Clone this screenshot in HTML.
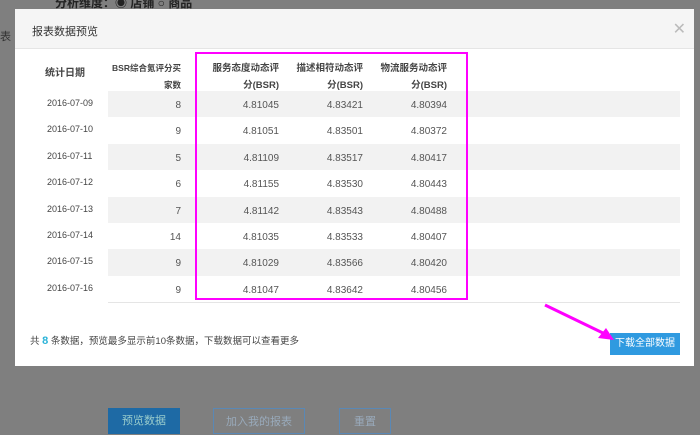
<!DOCTYPE html>
<html><head><meta charset="utf-8"><style>
*{margin:0;padding:0;box-sizing:border-box}
body{width:700px;height:432px;background:#7f7f7f;position:relative;overflow:hidden;font-family:"Liberation Sans","Noto Sans CJK SC",sans-serif;font-size:10px;color:#333}
.top{position:absolute;left:55px;top:-6px;color:#222;font-size:12px;font-weight:bold}
.side{position:absolute;left:0;top:28px;color:#333;font-size:11px}
.modal{position:absolute;left:15px;top:9px;width:679px;height:357px;background:#fff}
.hd{height:40px;background:#f5f5f5;border-bottom:1px solid #e5e5e5;padding:14px 0 0 17px;font-size:11px;color:#333}
.x{position:absolute;right:8px;top:10px;font-size:16px;color:#bbb}
.row{position:absolute;left:0;width:665px;height:26.4px}
.g{background:#f2f2f2;left:93px;width:572px}
.c{position:absolute;text-align:right;color:#555;white-space:nowrap}
.d{position:absolute;left:32px;color:#444;font-size:9px}
.mag{position:absolute;left:180px;top:43px;width:273px;height:248px;border:2px solid #f0f}
.foot{position:absolute;left:15px;top:324px;font-size:9.5px;color:#444}
.btn{position:absolute;left:595px;top:324px;width:70px;height:22px;background:#2f9ae0;color:#fff;text-align:center;line-height:22px;font-size:10px}
.b{position:absolute;top:408px;height:26px;line-height:26px;text-align:center;font-size:11px}
</style></head><body>
<div class="top">分析维度：◉ 店铺 ○ 商品</div>
<div class="side">表</div>
<div class="modal">
<div class="hd">报表数据预览</div><div class="x">✕</div>
<div class="c" style="left:30px;top:55px;width:40px;text-align:center;font-weight:bold;color:#444">统计日期</div>
<div class="c" style="left:93px;top:51px;width:73px;line-height:17px;font-weight:bold;color:#444;font-size:8.5px">BSR综合氪评分买<br>家数</div>
<div class="c" style="left:180px;top:51px;width:84px;line-height:17px;font-weight:bold;color:#444;font-size:9.5px">服务态度动态评<br>分(BSR)</div>
<div class="c" style="left:264px;top:51px;width:84px;line-height:17px;font-weight:bold;color:#444;font-size:9.5px">描述相符动态评<br>分(BSR)</div>
<div class="c" style="left:348px;top:51px;width:84px;line-height:17px;font-weight:bold;color:#444;font-size:9.5px">物流服务动态评<br>分(BSR)</div>
<div id="rows"></div>
<div class="mag"></div>
<div class="foot">共 <b style="color:#2bb3d8;font-size:11px">8</b> 条数据，预览最多显示前10条数据，下载数据可以查看更多</div>
<div class="btn">下载全部数据</div>
</div>
<svg style="position:absolute;left:540px;top:300px" width="80" height="45"><line x1="5" y1="5" x2="65" y2="34" stroke="#f0f" stroke-width="3"/><polygon points="74,40 58,38 66,28" fill="#f0f"/></svg>
<div class="b" style="left:108px;width:72px;background:#1e6aa5;color:#9cc">预览数据</div>
<div class="b" style="left:213px;width:92px;border:1px solid #5a88b5;color:#9ab">加入我的报表</div>
<div class="b" style="left:339px;width:52px;border:1px solid #5a88b5;color:#9ab">重置</div>
<script>
var d=[["09",8,"4.81045","4.83421","4.80394"],["10",9,"4.81051","4.83501","4.80372"],["11",5,"4.81109","4.83517","4.80417"],["12",6,"4.81155","4.83530","4.80443"],["13",7,"4.81142","4.83543","4.80488"],["14",14,"4.81035","4.83533","4.80407"],["15",9,"4.81029","4.83566","4.80420"],["16",9,"4.81047","4.83642","4.80456"]];
var h="";d.forEach(function(r,i){var t=82+i*26.4;
if(i%2==0)h+='<div class="row g" style="top:'+t+'px"></div>';
h+='<div class="d" style="top:'+(t+7)+'px">2016-07-'+r[0]+'</div>';
h+='<div class="c" style="left:93px;width:73px;top:'+(t+9)+'px">'+r[1]+'</div>';
h+='<div class="c" style="left:180px;width:84px;top:'+(t+9)+'px">'+r[2]+'</div>';
h+='<div class="c" style="left:264px;width:84px;top:'+(t+9)+'px">'+r[3]+'</div>';
h+='<div class="c" style="left:348px;width:84px;top:'+(t+9)+'px">'+r[4]+'</div>';});
h+='<div style="position:absolute;left:93px;top:293px;width:572px;border-top:1px solid #e5e5e5"></div>';
document.getElementById("rows").innerHTML=h;
</script>
</body></html>
